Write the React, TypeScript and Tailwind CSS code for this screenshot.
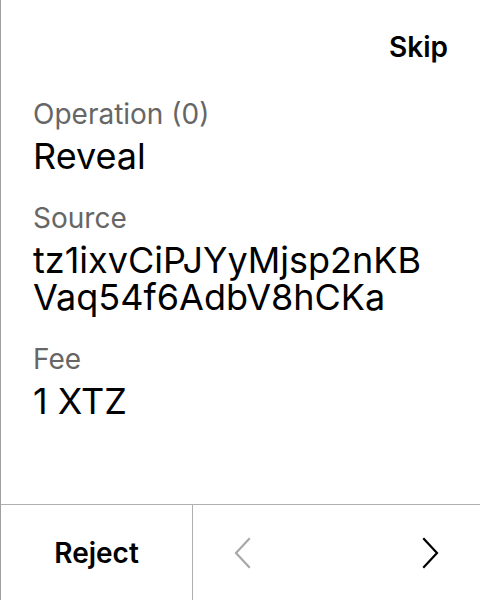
import React from "react";

function Field({ label, value }: { label: string; value: React.ReactNode }) {
  return (
    <div className="flex flex-col">
      <p className="text-[28px] leading-[34px] text-[#666666]">{label}</p>
      <p className="mt-[7px] text-[36px] leading-[37px] text-black">{value}</p>
    </div>
  );
}

function Chevron({ dir, color }: { dir: "left" | "right"; color: string }) {
  const points = dir === "left" ? "15,2 2,16 15,30" : "2,2 15,16 2,30";
  return (
    <svg width="17" height="32" viewBox="0 0 17 32" fill="none">
      <polyline
        points={points}
        stroke={color}
        strokeWidth="2.2"
        strokeLinecap="square"
        strokeLinejoin="miter"
      />
    </svg>
  );
}

export default function App() {
  return (
    <main
      className="flex h-[600px] w-[480px] flex-col border-l border-[#a0a0a0] bg-white text-black"
      style={{ fontFamily: "Inter, 'Noto Sans', sans-serif" }}
    >
      <div className="flex justify-end px-[32px] pt-[30px]">
        <button className="text-[28px] font-semibold leading-[34px]">Skip</button>
      </div>

      <div className="flex flex-1 flex-col gap-[26px] px-[32px] pt-[33px]">
        <Field label="Operation (0)" value="Reveal" />
        <Field
          label="Source"
          value={
            <>
              tz1ixvCiPJYyMjsp2nKB
              <br />
              Vaq54f6AdbV8hCKa
            </>
          }
        />
        <Field label="Fee" value="1 XTZ" />
      </div>

      <div className="flex h-[96px] border-t border-[#b0b0b0]">
        <button className="flex w-[192px] items-center justify-center border-r border-[#b0b0b0] text-[28px] font-semibold">
          Reject
        </button>
        <div className="flex flex-1 items-center justify-between px-[41px]">
          <Chevron dir="left" color="#a8a8a8" />
          <Chevron dir="right" color="#000000" />
        </div>
      </div>
    </main>
  );
}
